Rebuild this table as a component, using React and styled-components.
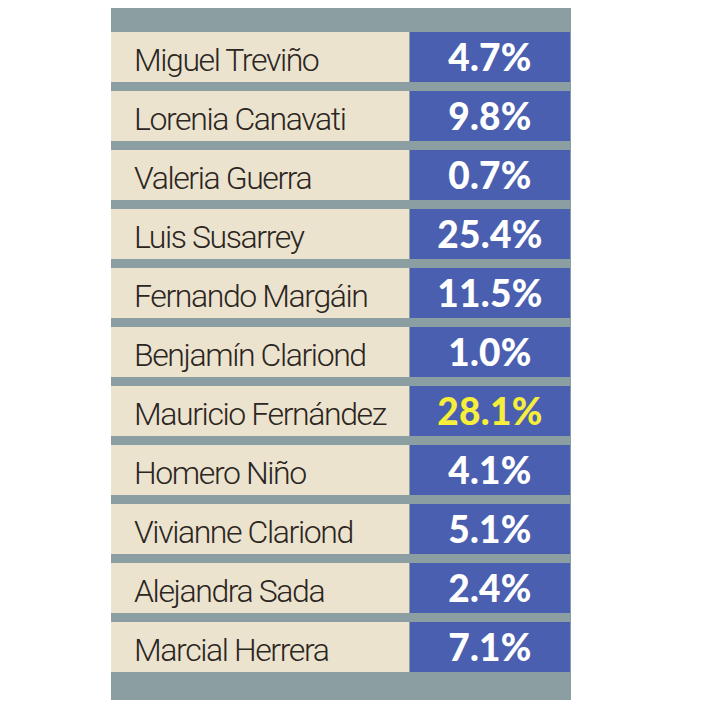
import React from "react";
import styled, { createGlobalStyle } from "styled-components";

const GlobalStyle = createGlobalStyle`
  body {
    margin: 0;
    background: #ffffff;
  }
`;

const Page = styled.div`
  padding: 8px 0 0 111px;
`;

const Panel = styled.div`
  width: 460px;
  box-sizing: border-box;
  background: #8b9ea2;
  padding: 24px 1px 28px 0;
  display: flex;
  flex-direction: column;
  gap: 9px;
`;

const Row = styled.div`
  display: grid;
  grid-template-columns: 298px 160px;
  column-gap: 1px;
  height: 50px;
`;

const Name = styled.div`
  background: #ece3cf;
  display: flex;
  align-items: center;
  padding: 5px 0 0 23px;
  font-family: "Roboto", "Liberation Sans", sans-serif;
  font-weight: 300;
  font-size: 32px;
  letter-spacing: -1.4px;
  line-height: 44px;
  color: #2b2622;
  white-space: nowrap;
`;

const Value = styled.div`
  background: #4b5fb0;
  display: flex;
  align-items: center;
  justify-content: center;
  font-family: "Lato", "Liberation Sans", sans-serif;
  font-weight: 900;
  font-size: 37px;
  letter-spacing: 0.3px;
  line-height: 48px;
  color: ${(p) => (p.$highlight ? "#f7ee3c" : "#ffffff")};
`;

const results = [
  { name: "Miguel Treviño", value: "4.7%" },
  { name: "Lorenia Canavati", value: "9.8%" },
  { name: "Valeria Guerra", value: "0.7%" },
  { name: "Luis Susarrey", value: "25.4%" },
  { name: "Fernando Margáin", value: "11.5%" },
  { name: "Benjamín Clariond", value: "1.0%" },
  { name: "Mauricio Fernández", value: "28.1%", highlight: true },
  { name: "Homero Niño", value: "4.1%" },
  { name: "Vivianne Clariond", value: "5.1%" },
  { name: "Alejandra Sada", value: "2.4%" },
  { name: "Marcial Herrera", value: "7.1%" },
];

const App = () => {
  return (
    <Page>
      <GlobalStyle />
      <Panel>
        {results.map((r) => (
          <Row key={r.name}>
            <Name>{r.name}</Name>
            <Value $highlight={r.highlight}>{r.value}</Value>
          </Row>
        ))}
      </Panel>
    </Page>
  );
};

export default App;
